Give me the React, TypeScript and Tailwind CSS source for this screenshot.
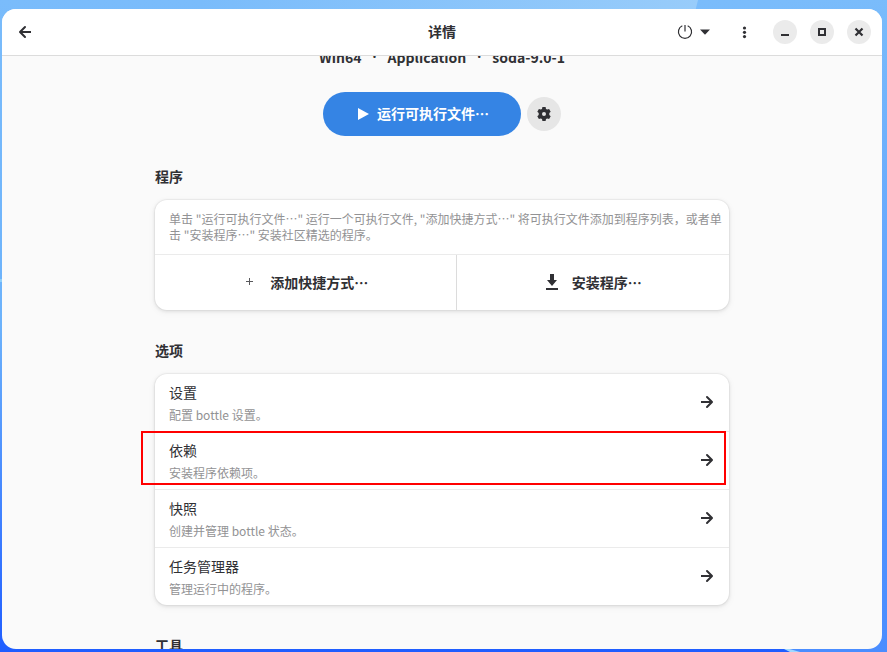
import React, { useState } from 'react';

const SECTIONS = [
  { id: 'settings', title: '设置', subtitle: '配置 bottle 设置。' },
  { id: 'dependencies', title: '依赖', subtitle: '安装程序依赖项。' },
  { id: 'snapshots', title: '快照', subtitle: '创建并管理 bottle 状态。' },
  { id: 'tasks', title: '任务管理器', subtitle: '管理运行中的程序。' },
];

const ArrowIcon: React.FC<{ className?: string }> = ({ className }) => (
  <svg viewBox="0 0 16 16" className={`w-4 h-4 ${className ?? ''}`} fill="none" stroke="currentColor" strokeWidth="2">
    <path d="M2 8h11" />
    <path d="M8 3l5 5-5 5" strokeLinecap="round" strokeLinejoin="round" />
  </svg>
);

const GearIcon = () => (
  <svg viewBox="0 0 16 16" className="w-4 h-4" fill="currentColor">
    <path
      fillRule="evenodd"
      d="M6.4 1h3.2l.4 1.9 1.2.7 1.9-.6 1.6 2.7L13.3 7v2l1.4 1.3-1.6 2.7-1.9-.6-1.2.7-.4 1.9H6.4L6 13.1l-1.2-.7-1.9.6-1.6-2.7L2.7 9V7L1.3 5.7 2.9 3l1.9.6L6 2.9zM8 6a2 2 0 1 0 0 4 2 2 0 0 0 0-4z"
    />
  </svg>
);

const WindowButton: React.FC<{ label: string; children: React.ReactNode }> = ({ label, children }) => (
  <button aria-label={label} className="w-6 h-6 rounded-full bg-[#ebebeb] hover:bg-[#dedede] flex items-center justify-center">
    <svg viewBox="0 0 16 16" className="w-4 h-4" fill="none" stroke="currentColor" strokeWidth="2">
      {children}
    </svg>
  </button>
);

const HeaderBar = () => (
  <header className="grid grid-cols-[1fr_auto_1fr] items-center h-[47px] shrink-0 px-[11px] bg-white border-b border-[#dcdcdc]">
    <button aria-label="返回" className="justify-self-start px-1">
      <ArrowIcon className="rotate-180" />
    </button>
    <h1 className="font-bold pb-0.5">详情</h1>
    <div className="justify-self-end flex items-center">
      <button aria-label="电源" className="flex items-center gap-1 mr-6">
        <svg viewBox="0 0 16 16" className="w-4 h-4" fill="none" stroke="currentColor" strokeWidth="1.2">
          <path d="M5.3 1.8a6.6 6.6 0 1 0 5.4 0" />
          <path d="M8 1v6.5" />
        </svg>
        <svg viewBox="0 0 16 16" className="w-4 h-4" fill="currentColor">
          <path d="M3 5.5h10L8 10.7z" />
        </svg>
      </button>
      <button aria-label="菜单" className="mr-5">
        <svg viewBox="0 0 16 16" className="w-4 h-4" fill="currentColor">
          <circle cx="7.5" cy="4" r="1.6" />
          <circle cx="7.5" cy="8.3" r="1.6" />
          <circle cx="7.5" cy="12.6" r="1.6" />
        </svg>
      </button>
      <div className="flex gap-[13px]">
        <WindowButton label="最小化">
          <path d="M4 11h8" />
        </WindowButton>
        <WindowButton label="最大化">
          <path d="M5 5h6v6H5z" />
        </WindowButton>
        <WindowButton label="关闭">
          <path d="M4.5 4.5l7 7M11.5 4.5l-7 7" strokeWidth="2.2" />
        </WindowButton>
      </div>
    </div>
  </header>
);

const Wallpaper = () => (
  <svg className="absolute inset-0 w-full h-full" viewBox="0 0 887 652" preserveAspectRatio="none">
    <defs>
      <linearGradient id="left" x1="0" y1="0" x2="0" y2="1">
        <stop offset="0" stopColor="#7abcfb" />
        <stop offset="0.5" stopColor="#6cb2fb" />
        <stop offset="0.8" stopColor="#3f80ff" />
        <stop offset="1" stopColor="#1f5dff" />
      </linearGradient>
      <linearGradient id="right" x1="0" y1="0" x2="0" y2="1">
        <stop offset="0" stopColor="#7abcfb" />
        <stop offset="0.8" stopColor="#4f92ff" />
        <stop offset="1" stopColor="#4a8dff" />
      </linearGradient>
      <linearGradient id="stripe" x1="0" y1="0" x2="1" y2="0">
        <stop offset="0" stopColor="#7abcfb" />
        <stop offset="1" stopColor="#98ccfa" />
      </linearGradient>
    </defs>
    <path d="M0 0h887v652H0z" fill="url(#left)" />
    <path d="M790 0h97v652h-97z" fill="url(#right)" />
    <path d="M200 0h498l-3 12H200z" fill="url(#stripe)" />
    <path d="M776 645l24 7h-10z" fill="#9fd8ff" />
    <path d="M0 279h3v3H0z" fill="#8fd0fb" />
  </svg>
);

const App: React.FC = () => {
  const [selected, setSelected] = useState('dependencies');

  return (
    <div className="relative h-screen overflow-hidden pt-[9px] pr-[5px] pb-[3px] pl-[2px] bg-[#7abcfb] text-[#303034] text-sm leading-5 font-['Noto_Sans_CJK_SC','Noto_Sans',sans-serif]">
      <Wallpaper />

      <div className="relative h-full flex flex-col overflow-hidden rounded-[14px] bg-[#fafafa]">
        <HeaderBar />

        <main className="flex-1 min-h-0 overflow-hidden px-4">
          <div className="max-w-[574px] mx-auto -mt-[9px]">
            <div className="flex justify-center gap-[11px] font-bold mb-[25px]">
              <span>Win64</span>
              <span className="font-['Noto_Sans',sans-serif]">·</span>
              <span>Application</span>
              <span className="font-['Noto_Sans',sans-serif]">·</span>
              <span>soda-9.0-1</span>
            </div>

            <div className="flex items-center justify-center gap-1.5 mb-[30px]">
              <button className="flex items-center gap-1.5 h-11 px-8 rounded-full bg-[#3584e4] hover:bg-[#478fe6] text-white font-bold">
                <svg viewBox="0 0 16 16" className="w-4 h-4" fill="currentColor">
                  <path d="M3 2l11 6-11 6z" />
                </svg>
                <span className="pb-0.5">运行可执行文件…</span>
              </button>
              <button aria-label="运行选项" className="w-[34px] h-[34px] rounded-full bg-[#e6e6e6] flex items-center justify-center">
                <GearIcon />
              </button>
            </div>

            {/* Programs */}
            <section className="mb-[30px]">
              <h2 className="font-bold mb-[14px]">程序</h2>
              <div className="rounded-xl bg-white shadow-[0_0_0_1px_rgba(0,0,0,0.03),0_1px_3px_1px_rgba(0,0,0,0.07),0_2px_6px_2px_rgba(0,0,0,0.03)]">
                <p className="py-[11px] pl-[14px] pr-1 text-xs leading-4 text-[#929294] border-b border-[#ebebeb]">
                  单击 "运行可执行文件…" 运行一个可执行文件, "添加快捷方式…" 将可执行文件添加到程序列表，或者单击 "安装程序…" 安装社区精选的程序。
                </p>
                <div className="flex h-[55px] font-bold">
                  <button className="flex-auto flex items-center justify-center gap-3 pb-0.5 border-r border-[#dcdcdc]">
                    <svg viewBox="0 0 16 16" className="w-4 h-4 opacity-80" fill="none" stroke="currentColor">
                      <path d="M4 7.5h7M7.5 4v7" />
                    </svg>
                    添加快捷方式…
                  </button>
                  <button className="flex-auto flex items-center justify-center gap-3 pb-0.5">
                    <svg viewBox="0 0 16 16" className="w-4 h-4" fill="currentColor">
                      <path d="M6 0h4v6h3l-5 6-5-6h3zM2 14h12v2H2z" />
                    </svg>
                    安装程序…
                  </button>
                </div>
              </div>
            </section>

            {/* Options */}
            <section className="mb-[30px]">
              <h2 className="font-bold mb-[14px]">选项</h2>
              <ul className="rounded-xl bg-white divide-y divide-[#ebebeb] shadow-[0_0_0_1px_rgba(0,0,0,0.03),0_1px_3px_1px_rgba(0,0,0,0.07),0_2px_6px_2px_rgba(0,0,0,0.03)]">
                {SECTIONS.map(item => (
                  <li key={item.id} className="relative">
                    <button
                      onClick={() => setSelected(item.id)}
                      className="w-full flex items-center justify-between px-[14px] py-2 text-left"
                    >
                      <span className="flex flex-col gap-[5px]">
                        <span>{item.title}</span>
                        <span className="text-xs leading-4 text-[#929294]">{item.subtitle}</span>
                      </span>
                      <ArrowIcon className="mb-px" />
                    </button>
                    {selected === item.id && (
                      <div className="absolute -left-[14px] right-[3px] -top-px bottom-1 border-2 border-[#f00] pointer-events-none"></div>
                    )}
                  </li>
                ))}
              </ul>
            </section>

            {/* Tools */}
            <section>
              <h2 className="font-bold mb-[14px]">工具</h2>
            </section>
          </div>
        </main>
      </div>
    </div>
  );
};

export default App;
